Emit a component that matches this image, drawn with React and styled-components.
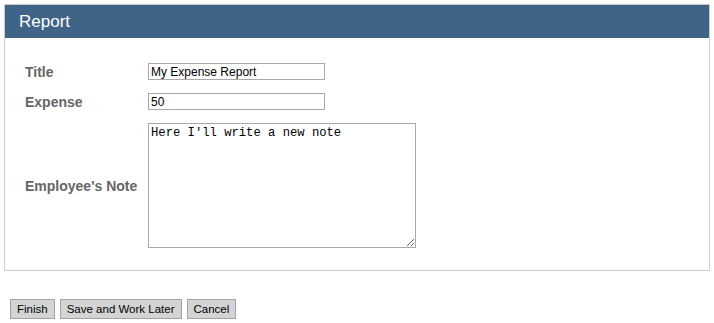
import React from "react";
import styled, { createGlobalStyle } from "styled-components";

const GlobalStyle = createGlobalStyle`
  body {
    margin: 0;
    background: #fff;
    font-family: "Liberation Sans", Arial, sans-serif;
  }
`;

const Page = styled.div`
  padding: 4px 4px 0 4px;
`;

const Panel = styled.div`
  border: 1px solid #cccccc;
`;

const PanelHeader = styled.div`
  height: 33px;
  background-color: #3f6488;
  color: #ffffff;
  font-size: 17px;
  line-height: 33px;
  padding-left: 14px;
`;

const PanelBody = styled.div`
  padding: 25px 20px 22px 20px;
`;

const Form = styled.div`
  display: grid;
  grid-template-columns: 123px auto;
  row-gap: 13px;
  align-items: center;
`;

const Label = styled.label`
  font-size: 14px;
  font-weight: bold;
  color: #666666;
`;

const TextInput = styled.input`
  box-sizing: border-box;
  width: 177px;
  height: 17px;
  margin: 0;
  padding: 0 2px;
  border: 1px solid #a9a9a9;
  font-family: "Liberation Sans", Arial, sans-serif;
  font-size: 12px;
  color: #000;
  outline: none;
`;

const NoteArea = styled.textarea`
  box-sizing: border-box;
  width: 268px;
  height: 125px;
  margin: 0;
  padding: 2px;
  border: 1px solid #a9a9a9;
  font-family: "Liberation Mono", "DejaVu Sans Mono", monospace;
  font-size: 12.2px;
  line-height: 15px;
  color: #000;
  outline: none;
`;

const ButtonBar = styled.div`
  display: flex;
  gap: 5px;
  padding: 28px 0 0 6px;
`;

const Button = styled.button`
  height: 20px;
  padding: 0 6px;
  background-color: #d4d4d4;
  border: 1px solid #a3a3a3;
  border-radius: 0;
  font-family: "Liberation Sans", Arial, sans-serif;
  font-size: 11.5px;
  color: #000;
`;

export default function App() {
  return (
    <>
      <GlobalStyle />
      <Page>
        <Panel>
          <PanelHeader>Report</PanelHeader>
          <PanelBody>
            <Form>
              <Label>Title</Label>
              <TextInput type="text" defaultValue="My Expense Report" />
              <Label>Expense</Label>
              <TextInput type="text" defaultValue="50" />
              <Label>Employee's Note</Label>
              <NoteArea defaultValue="Here I'll write a new note" />
            </Form>
          </PanelBody>
        </Panel>
        <ButtonBar>
          <Button>Finish</Button>
          <Button>Save and Work Later</Button>
          <Button>Cancel</Button>
        </ButtonBar>
      </Page>
    </>
  );
}
